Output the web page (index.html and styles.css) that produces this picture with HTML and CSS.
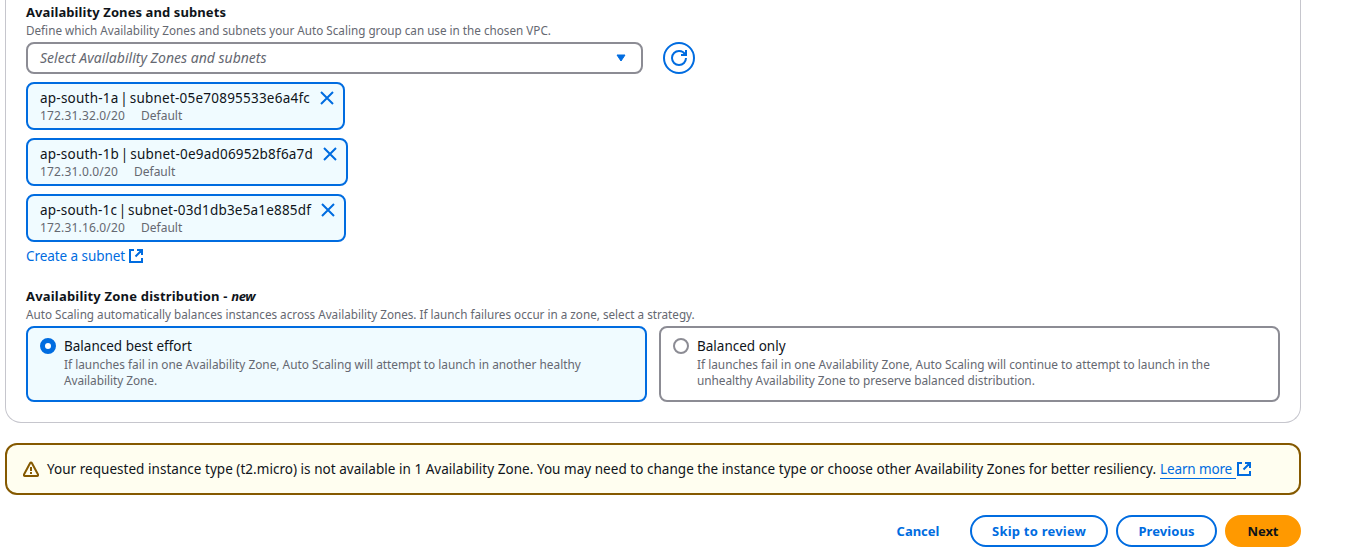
FILE: index.html
```
<!DOCTYPE html>
<html lang="en">
<head>
<meta charset="utf-8">
<title>Create Auto Scaling group</title>
<link rel="stylesheet" href="styles.css">
</head>
<body>
<svg class="defs" aria-hidden="true">
  <symbol id="close" viewBox="0 0 16 16"><path d="m2 2 12 12M14 2 2 14"/></symbol>
  <symbol id="external" viewBox="0 0 16 16"><path d="M9 2h5v5M7.500 8.500 14 2M14 10v4H2V2h4"/></symbol>
</svg>
<main class="page">
  <section class="container">
    <h3 class="label label-zones">Availability Zones and subnets</h3>
    <p class="hint">Define which Availability Zones and subnets your Auto Scaling group can use in the chosen VPC.</p>
    <div class="select-row">
      <div class="select">
        <span class="placeholder">Select Availability Zones and subnets</span>
        <svg class="caret" viewBox="0 0 16 16"><path d="M4 5h8l-4 6-4-6Z"/></svg>
      </div>
      <button class="refresh" aria-label="Refresh">
        <svg class="icon" viewBox="0 0 16 16"><path d="M10 5h5V0"/><path d="M15 8a6.957 6.957 0 0 1-7 7 6.957 6.957 0 0 1-7-7 6.957 6.957 0 0 1 7-7 6.870 6.870 0 0 1 6.300 4"/></svg>
      </button>
    </div>
    <div class="tokens">
      <div class="token">
        <div><div class="token-name token-a">ap-south-1a<span class="bar"> | </span>subnet-05e70895533e6a4fc</div>
        <div class="token-tags"><span class="cidr">172.31.32.0/20</span><span>Default</span></div></div>
        <svg class="icon"><use href="#close"/></svg>
      </div>
      <div class="token">
        <div><div class="token-name token-b">ap-south-1b<span class="bar"> | </span>subnet-0e9ad06952b8f6a7d</div>
        <div class="token-tags"><span class="cidr">172.31.0.0/20</span><span>Default</span></div></div>
        <svg class="icon"><use href="#close"/></svg>
      </div>
      <div class="token">
        <div><div class="token-name token-c">ap-south-1c<span class="bar"> | </span>subnet-03d1db3e5a1e885df</div>
        <div class="token-tags"><span class="cidr">172.31.16.0/20</span><span>Default</span></div></div>
        <svg class="icon"><use href="#close"/></svg>
      </div>
    </div>
    <a class="create-link"><span>Create a subnet</span><svg class="icon"><use href="#external"/></svg></a>

    <h3 class="label label-dist">Availability Zone distribution - <em>new</em></h3>
    <p class="hint">Auto Scaling automatically balances instances across Availability Zones. If launch failures occur in a zone, select a strategy.</p>
    <div class="tiles">
      <label class="tile tile-selected">
        <span class="radio radio-on"></span>
        <span class="tile-text">
          <span class="tile-title">Balanced best effort</span>
          <span class="tile-hint">If launches fail in one Availability Zone, Auto Scaling will attempt to launch in another healthy<br><span class="tile-last">Availability Zone.</span></span>
        </span>
      </label>
      <label class="tile">
        <span class="radio"></span>
        <span class="tile-text">
          <span class="tile-title">Balanced only</span>
          <span class="tile-hint">If launches fail in one Availability Zone, Auto Scaling will continue to attempt to launch in the<br><span class="tile-last">unhealthy Availability Zone to preserve balanced distribution.</span></span>
        </span>
      </label>
    </div>
  </section>

  <div class="alert">
    <svg class="icon" viewBox="0 0 16 16"><path d="M7.150 2.100.980 13.450c-.400.700.050 1.550.850 1.550h12.340c.800 0 1.250-.850.850-1.550L8.850 2.100c-.400-.700-1.300-.700-1.700 0Z"/><path d="M8 6v4M8 11v2" /></svg>
    <span class="alert-text">Your requested instance type (t2.micro) is not available in 1 Availability Zone. You may need to change the instance type or choose other Availability Zones for better resiliency.</span>
    <a class="learn">Learn more</a>
    <svg class="icon external"><use href="#external"/></svg>
  </div>

  <div class="actions">
    <button class="button button-link">Cancel</button>
    <button class="button button-skip">Skip to review</button>
    <button class="button button-prev">Previous</button>
    <button class="button button-primary">Next</button>
  </div>
</main>
</body>
</html>
```
FILE: styles.css
```
* { box-sizing: border-box; }
body {
  margin: 0;
  overflow: hidden;
  background: #fff;
  color: #0f141a;
  font: 13.5px/20px "Noto Sans", "Open Sans", sans-serif;
  white-space: nowrap;
}
.defs { position: absolute; width: 0; height: 0; }
.page { width: 1296px; margin-left: 5px; }
.icon { flex: none; width: 16px; height: 16px; fill: none; stroke: currentColor; stroke-width: 2; }

.container {
  height: 423px;
  padding: 2px 20px 0;
  border: 1px solid #c6c6cd;
  border-top: 0;
  border-radius: 0 0 16px 16px;
}
.label { margin: 0; font-size: 13px; font-weight: 700; line-height: 20px; }
.label-zones { letter-spacing: .092px; }
.label-dist { margin-top: 20px; letter-spacing: .19px; }
.label em { letter-spacing: -.4px; }
.hint { margin: 0 0 4px; font-size: 11.7px; line-height: 16px; color: #656871; }

.select-row { display: flex; gap: 20px; }
.select {
  display: flex;
  align-items: center;
  justify-content: space-between;
  width: 617px;
  height: 32px;
  padding: 0 12px;
  border: 2px solid #8c8c94;
  border-radius: 8px;
}
.placeholder { color: #656871; font-size: 14px; font-style: italic; }
.caret { width: 16px; height: 16px; fill: #006ce0; stroke: #006ce0; stroke-width: 1; stroke-linejoin: round; }
.refresh {
  display: grid;
  place-items: center;
  width: 32px;
  height: 32px;
  padding: 0;
  border: 2px solid #006ce0;
  border-radius: 50%;
  background: #fff;
  color: #006ce0;
}

.tokens { display: flex; flex-direction: column; align-items: flex-start; gap: 8px; margin-top: 8px; }
.token {
  display: flex;
  gap: 9px;
  height: 48px;
  padding: 4px 8px 4px 12px;
  border: 2px solid #006ce0;
  border-radius: 8px;
  background: #f0fbff;
}
.token .icon { margin-top: 2px; color: #006ce0; }
.token-a { letter-spacing: .225px; }
.token-b { letter-spacing: .21px; }
.token-c { letter-spacing: .19px; }
.bar { margin: 0 -2px; }
.token-tags { display: flex; gap: 16px; font-size: 12px; line-height: 16px; color: #656871; }
.cidr { letter-spacing: .161px; }

.create-link { display: flex; align-items: center; gap: 3px; margin-top: 4px; color: #006ce0; letter-spacing: -.067px; }

.tiles { display: grid; grid-template-columns: 1fr 1fr; gap: 12px; }
.tile {
  display: flex;
  gap: 8px;
  height: 76px;
  padding: 8px 12px;
  border: 2px solid #8c8c94;
  border-radius: 8px;
}
.tile-selected { border-color: #006ce0; background: #f0fbff; }
.radio { flex: none; width: 16px; height: 16px; margin-top: 2px; border: 2px solid #8c8c94; border-radius: 50%; background: #fff; }
.radio-on { border: 5px solid #006ce0; }
.tile-text { display: flex; flex-direction: column; }
.tile-hint { font-size: 11.85px; line-height: 16px; color: #656871; }
.tile-last { letter-spacing: -.045px; }

.alert {
  display: flex;
  align-items: center;
  height: 52px;
  margin-top: 20px;
  padding: 0 16px;
  border: 2px solid #855900;
  border-radius: 12px;
  background: #fffef0;
  color: #855900;
}
.alert-text { margin: 0 4px 0 8px; color: #0f141a; letter-spacing: .033px; }
.learn { width: 76px; height: 20px; border-bottom: 1px solid #006ce0; color: #006ce0; letter-spacing: -.14px; }
.alert .external { color: #006ce0; }

.actions { display: flex; justify-content: flex-end; gap: 8px; margin-top: 20px; }
.button {
  height: 32px;
  padding: 0 20px;
  border: 2px solid #006ce0;
  border-radius: 20px;
  background: #fff;
  color: #006ce0;
  font: 700 13px/20px "Noto Sans", "Open Sans", sans-serif;
}
.button-link { width: 88px; border-color: transparent; }
.button-skip { width: 138px; letter-spacing: .225px; }
.button-prev { width: 101px; letter-spacing: .058px; }
.button-primary { width: 76px; border-color: #ff9900; background: #ff9900; color: #0f141a; letter-spacing: -.1px; }
```
